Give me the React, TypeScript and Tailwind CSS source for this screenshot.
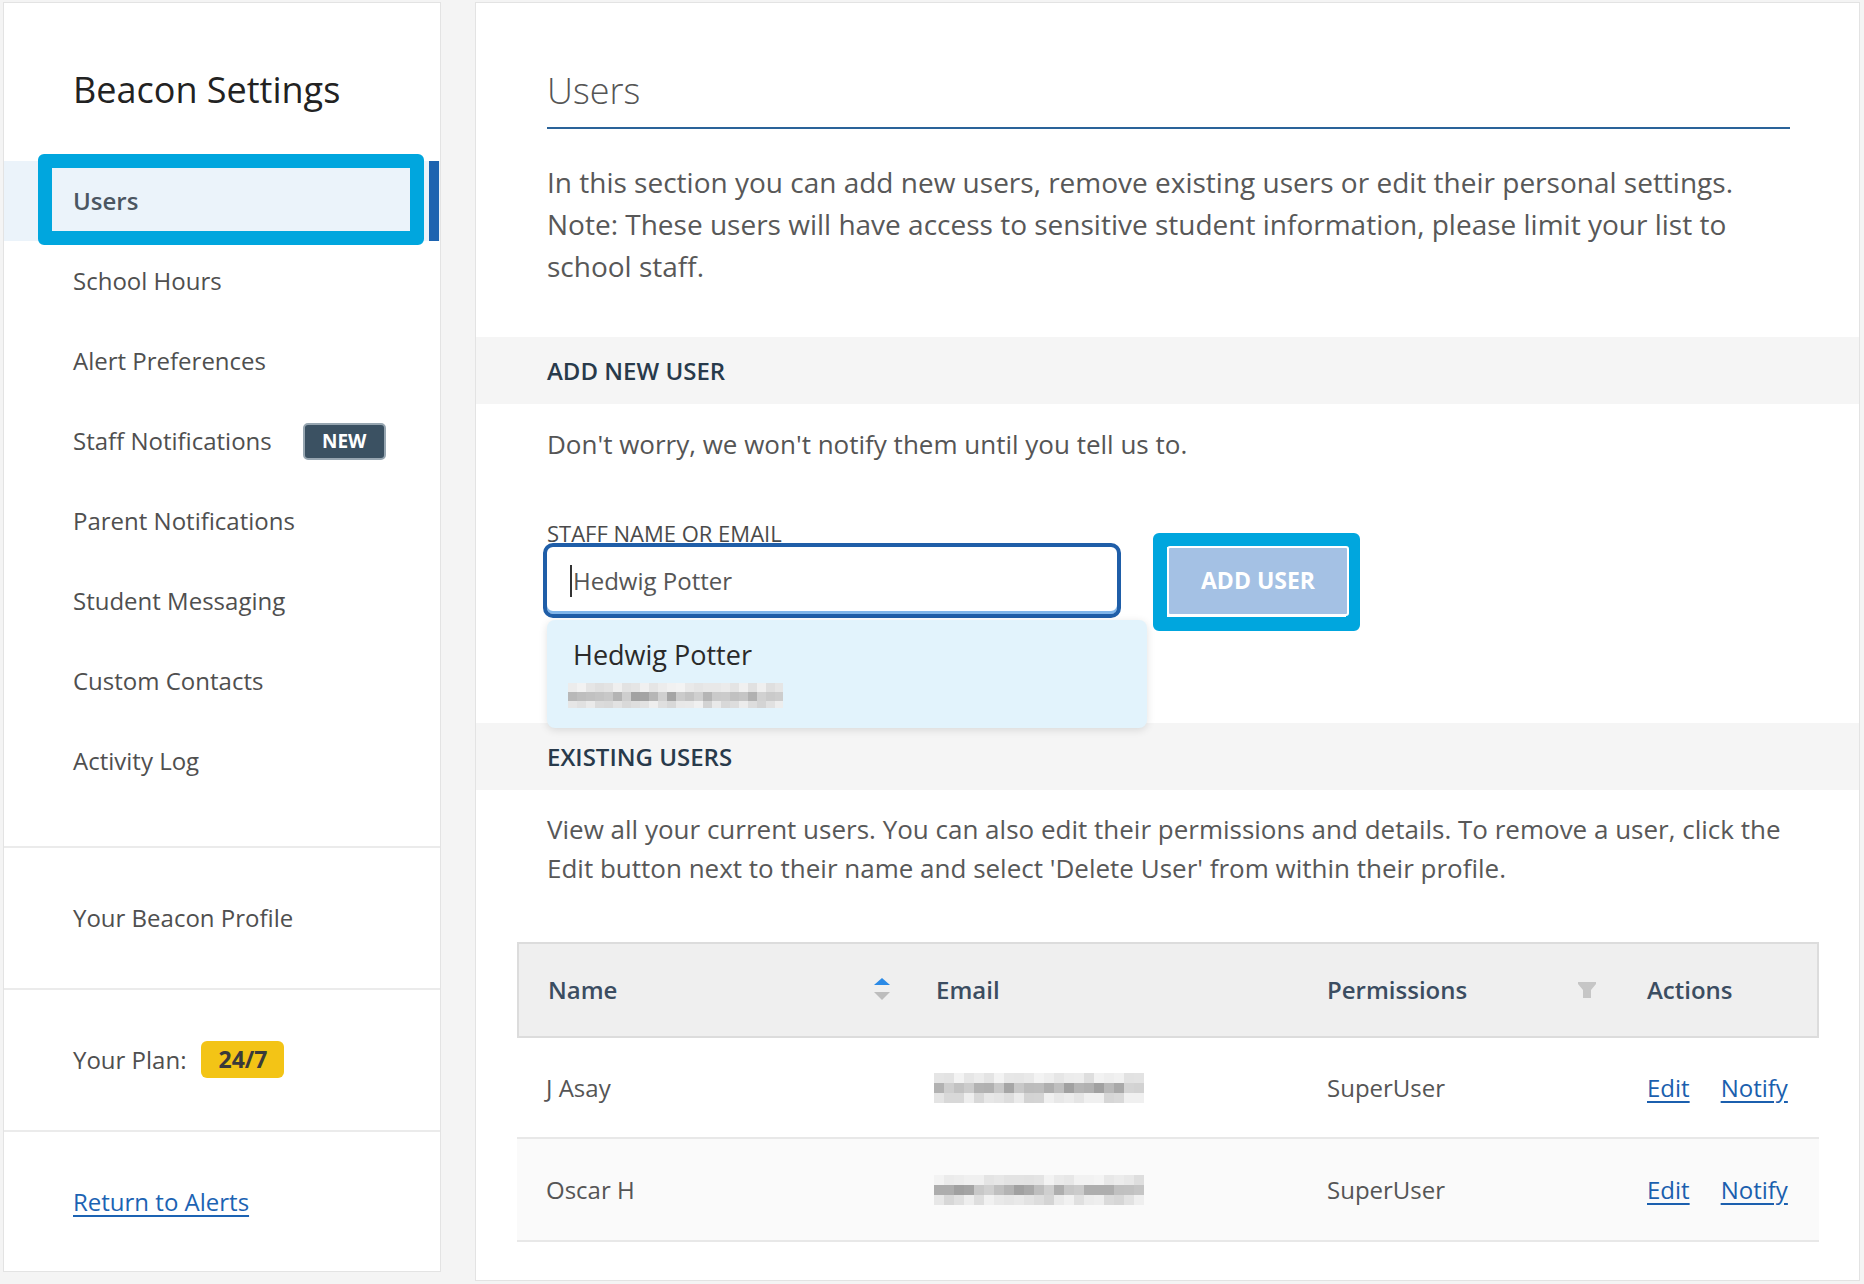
import React from "react";

function Mosaic({ w, h, cell = 10, seed = 7 }: { w: number; h: number; cell?: number; seed?: number }) {
  const cols = Math.ceil(w / cell);
  const rows = Math.ceil(h / cell);
  let s = seed;
  const rand = () => {
    s = (s * 9301 + 49297) % 233280;
    return s / 233280;
  };
  const rects: React.ReactNode[] = [];
  for (let r = 0; r < rows; r++) {
    for (let c = 0; c < cols; c++) {
      const v = rand();
      let l: number;
      if (r === 0) l = 222 + Math.round(v * 22);
      else if (r === rows - 1) l = 210 + Math.round(v * 32);
      else l = 160 + Math.round(v * 55);
      rects.push(
        <rect key={r + "-" + c} x={c * cell} y={r * cell} width={cell} height={cell} fill={`rgb(${l},${l},${l})`} />
      );
    }
  }
  return (
    <svg width={w} height={h} viewBox={`0 0 ${w} ${h}`} className="block">
      {rects}
    </svg>
  );
}

function SortIcon() {
  return (
    <svg width="16" height="24" viewBox="0 0 16 24" className="block">
      <polygon points="0,7 16,7 8,0" fill="#2b8ae6" />
      <polygon points="0,14 16,14 8,22" fill="#bdbdbd" />
    </svg>
  );
}

function FilterIcon() {
  return (
    <svg width="18" height="16" viewBox="0 0 18 16" className="block">
      <polygon points="0,0 18,0 18,2 13,8 13,16 5,16 5,8 0,2" fill="#c6c6c6" />
    </svg>
  );
}

const navItems = [
  "School Hours",
  "Alert Preferences",
  "Staff Notifications",
  "Parent Notifications",
  "Student Messaging",
  "Custom Contacts",
  "Activity Log",
];

function Sidebar() {
  return (
    <aside className="w-[438px] h-[1270px] bg-white border border-[#e3e3e3] flex flex-col shrink-0">
      <div className="h-[158px] pt-[65px] pl-[69px]">
        <h1 className="text-[36px] leading-[44px] text-[#222222] font-normal">Beacon Settings</h1>
      </div>
      <nav className="flex flex-col">
        <div className="relative h-[80px] flex items-center bg-[#ebf3fa]">
          <span className="flex-1 pl-[69px] text-[24px] font-semibold text-[#4b5661]">Users</span>
          <span className="self-stretch w-[10px] mr-[1px] bg-[#1d63b0]" />
          <div className="absolute left-[34px] top-[-7px] w-[386px] h-[91px] border-[14px] border-[#00a6de] rounded-[6px]" />
        </div>
        {navItems.map((item) => (
          <div key={item} className="h-[80px] flex items-center pl-[69px] text-[24px] text-[#4f4f4f]">
            <span>{item}</span>
            {item === "Staff Notifications" && (
              <span className="ml-[31px] w-[83px] h-[37px] rounded-[5px] bg-[#3b5162] border-2 border-[#97a6b1] text-white text-[19px] font-bold flex items-center justify-center">
                NEW
              </span>
            )}
          </div>
        ))}
      </nav>
      <div className="h-[45px]" />
      <section className="h-[142px] border-t-2 border-[#ebebeb] flex items-center pl-[69px] text-[24px] text-[#4f4f4f]">
        Your Beacon Profile
      </section>
      <section className="h-[142px] border-t-2 border-[#ebebeb] flex items-center pl-[69px] text-[24px] text-[#4f4f4f]">
        <span>Your Plan:</span>
        <span className="ml-[15px] mt-[-2px] w-[83px] h-[37px] rounded-[6px] bg-[#f3c416] text-[#3a3a3a] text-[23px] font-bold flex items-center justify-center">
          24/7
        </span>
      </section>
      <section className="flex-1 border-t-2 border-[#ebebeb] flex items-center pl-[69px] text-[24px]">
        <a href="#" className="text-[#1c63b3] underline underline-offset-[4px] decoration-[2px]">
          Return to Alerts
        </a>
      </section>
    </aside>
  );
}

function Main() {
  return (
    <main className="w-[1385px] h-[1279px] bg-white border border-[#e3e3e3] shrink-0 flex flex-col">
      <div className="pl-[71px] pr-[69px] pt-[66px] pb-[50px]">
        <h2 className="text-[36px] leading-[44px] font-light text-[#555555] pb-[14px] border-b-2 border-[#2a6399]">
          Users
        </h2>
        <div className="mt-[32px] text-[28px] leading-[42px] text-[#585858] whitespace-nowrap">
          <div>In this section you can add new users, remove existing users or edit their personal settings.</div>
          <div>Note: These users will have access to sensitive student information, please limit your list to</div>
          <div>school staff.</div>
        </div>
      </div>

      <div className="h-[67px] shrink-0 bg-[#f5f5f5] flex items-center pl-[71px] text-[24px] font-semibold text-[#283a4b]">
        ADD NEW USER
      </div>

      <div className="relative pl-[71px] pt-[22px] pb-[105px]">
        <p className="text-[26px] leading-[36px] text-[#555555]">Don't worry, we won't notify them until you tell us to.</p>
        <div className="mt-[60px] text-[22px] leading-[22px] text-[#4a4a4a]">STAFF NAME OR EMAIL</div>
        <div className="mt-[-1px] flex items-center">
          <div className="ml-[-4px] w-[578px] h-[75px] border-[4px] border-[#1f5ea8] rounded-[10px] shadow-[inset_0_-3px_0_#7fb5ea] bg-white flex items-center pl-[23px]">
            <span className="w-[2px] h-[32px] bg-[#333333]" />
            <span className="ml-[1px] text-[24px] text-[#555555]">Hedwig Potter</span>
          </div>
          <div className="relative ml-[46px]">
            <div className="absolute left-[-14px] right-[-11px] top-[-13px] bottom-[-15px] border-[14px] border-[#00a6de] rounded-[6px]" />
            <button className="relative w-[182px] h-[70px] border-2 border-white bg-[#a4c1e4] text-white text-[23px] font-bold rounded-[3px]">
              ADD USER
            </button>
          </div>
        </div>
        <div className="absolute z-10 left-[71px] top-[216px] w-[600px] h-[108px] bg-[#e2f3fc] rounded-[8px] shadow-[0_2px_8px_rgba(0,0,0,0.12)] pt-[17px] pl-[26px]">
          <div className="text-[27px] leading-[36px] text-[#2a2a2a]">Hedwig Potter</div>
          <div className="mt-[10px] ml-[-5px]">
            <Mosaic w={215} h={25} cell={9} seed={11} />
          </div>
        </div>
      </div>

      <div className="h-[67px] shrink-0 bg-[#f5f5f5] flex items-center pl-[71px] text-[24px] font-semibold text-[#283a4b]">
        EXISTING USERS
      </div>

      <div className="px-[41px] pt-[20px]">
        <div className="pl-[30px] text-[26px] leading-[39px] text-[#585858] whitespace-nowrap">
          <div>View all your current users. You can also edit their permissions and details. To remove a user, click the</div>
          <div>Edit button next to their name and select 'Delete User' from within their profile.</div>
        </div>

        <div className="mt-[54px] w-[1302px]">
          <div className="grid grid-cols-[386px_391px_320px_201px] h-[96px] bg-[#efefef] border-2 border-[#dcdcdc] items-center text-[24px] font-semibold text-[#3b4d61]">
            <div className="flex items-center justify-between pl-[29px] pr-[15px]">
              <span>Name</span>
              <SortIcon />
            </div>
            <div className="pl-[31px]">Email</div>
            <div className="flex items-center justify-between pl-[31px] pr-[20px]">
              <span>Permissions</span>
              <FilterIcon />
            </div>
            <div className="pl-[31px]">Actions</div>
          </div>

          {[
            { name: "J Asay", seed: 3, bg: "", h: "h-[101px]" },
            { name: "Oscar H", seed: 19, bg: "bg-[#fafafa]", h: "h-[103px]" },
          ].map((row) => (
            <div
              key={row.name}
              className={`grid grid-cols-[388px_391px_320px_203px] ${row.h} ${row.bg} border-b-2 border-[#e8e8e8] items-center text-[24px] text-[#555555]`}
            >
              <div className="pl-[29px]">{row.name}</div>
              <div className="pl-[29px]">
                <Mosaic w={210} h={30} cell={10} seed={row.seed} />
              </div>
              <div className="pl-[31px]">SuperUser</div>
              <div className="pl-[31px] flex gap-[31px]">
                <a href="#" className="text-[#1b5fae] underline underline-offset-[4px]">Edit</a>
                <a href="#" className="text-[#1b5fae] underline underline-offset-[4px]">Notify</a>
              </div>
            </div>
          ))}
        </div>
      </div>
    </main>
  );
}

export default function App() {
  return (
    <div className="w-[1864px] h-[1284px] bg-[#f4f4f4] flex items-start pl-[3px] pt-[2px] gap-[34px] overflow-hidden font-['Open_Sans',sans-serif]">
      <Sidebar />
      <Main />
    </div>
  );
}
